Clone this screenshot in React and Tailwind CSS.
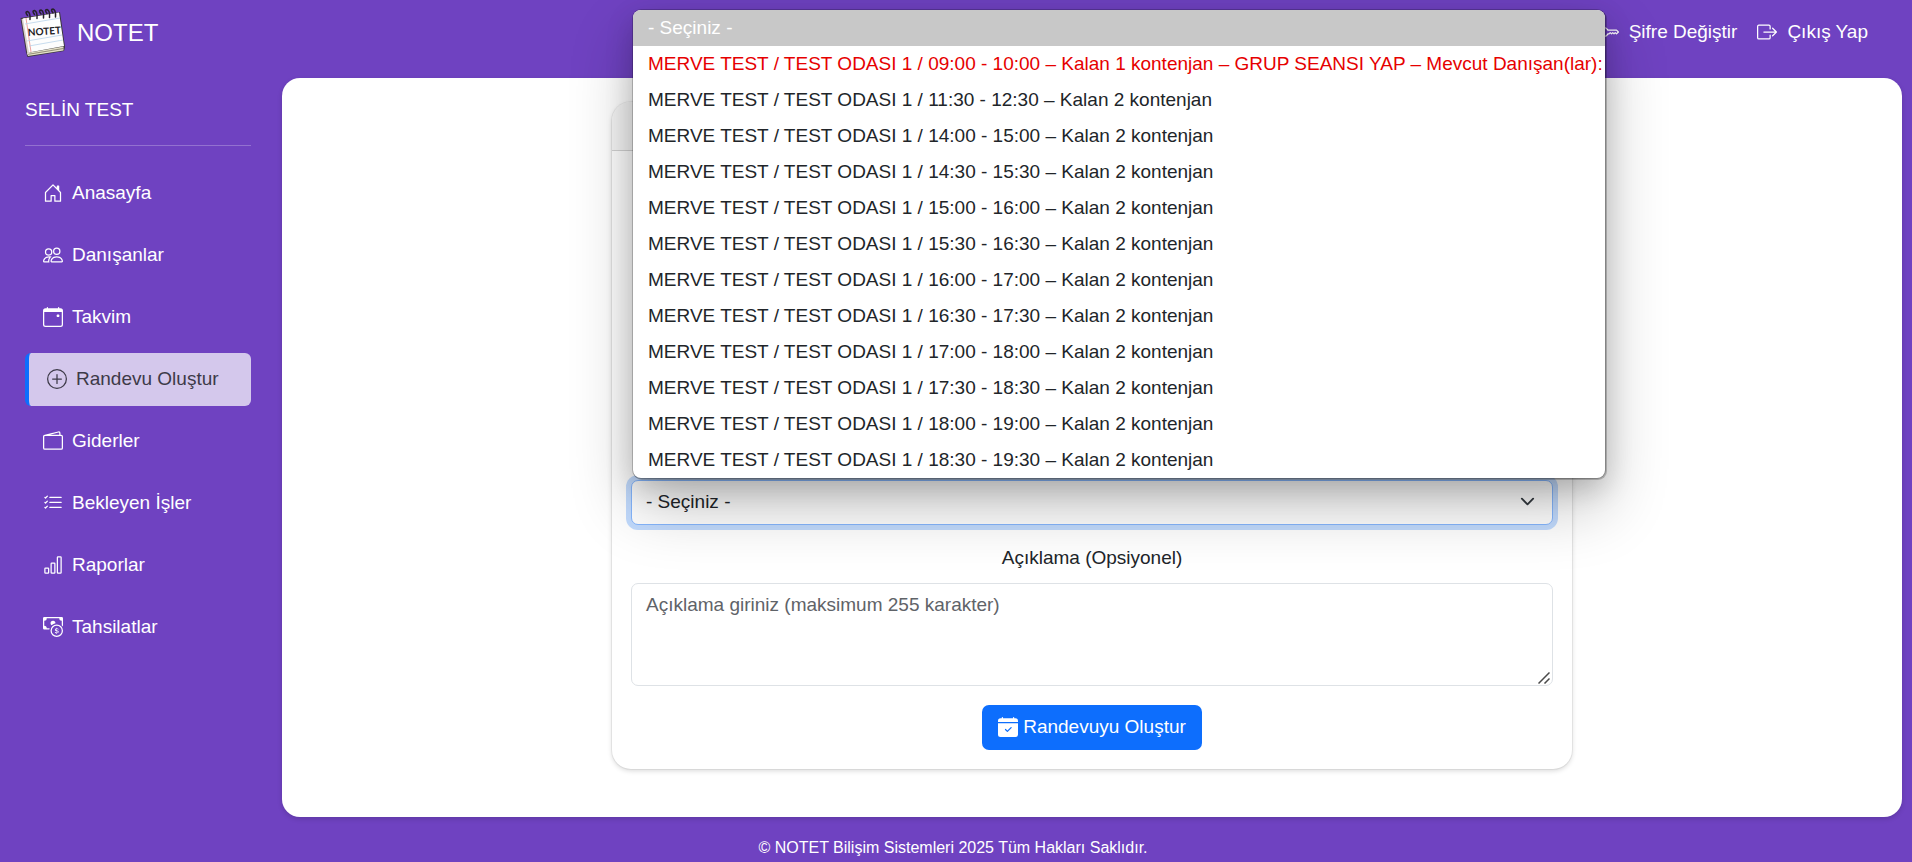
import { useState } from 'react';
import {
  BsBarChart,
  BsBoxArrowRight,
  BsCalendarCheckFill,
  BsCalendarEvent,
  BsCashCoin,
  BsHouseDoor,
  BsKey,
  BsListCheck,
  BsPeople,
  BsPlusCircle,
  BsWallet2,
} from 'react-icons/bs';

const menu = [
  { label: 'Anasayfa', icon: BsHouseDoor },
  { label: 'Danışanlar', icon: BsPeople },
  { label: 'Takvim', icon: BsCalendarEvent },
  { label: 'Randevu Oluştur', icon: BsPlusCircle, active: true },
  { label: 'Giderler', icon: BsWallet2 },
  { label: 'Bekleyen İşler', icon: BsListCheck },
  { label: 'Raporlar', icon: BsBarChart },
  { label: 'Tahsilatlar', icon: BsCashCoin },
];

const hours = [
  '11:30 - 12:30',
  '14:00 - 15:00',
  '14:30 - 15:30',
  '15:00 - 16:00',
  '15:30 - 16:30',
  '16:00 - 17:00',
  '16:30 - 17:30',
  '17:00 - 18:00',
  '17:30 - 18:30',
  '18:00 - 19:00',
  '18:30 - 19:30',
];

function Logo() {
  return (
    <svg viewBox="0 0 48 50" className="h-[50px] w-12 shrink-0" aria-hidden="true">
      <path d="M1.500 10 L7 44 L8.500 49 L45 43 L46 39 L41 4 Z" fill="#3a3638" />
      <path d="M8 45 L44.500 38.500 L44.500 42.500 L9 48 Z" fill="#e4e0c8" />
      <path d="M8 46.500 L44.500 40.500" stroke="#6f6a55" strokeWidth="0.700" />
      <path d="M2.500 11 L7 10 L11 44 L8.500 47 Z" fill="#d9d0cb" />
      <path d="M4 10.500 L40 4.500 L45 38 L10 44.500 Z" fill="#fdfdfd" />
      <path d="M7 10 L12 44" stroke="#e98a86" strokeWidth="0.800" />
      <path d="M6 16 L41 10 M10 38 L44 32 M8 33 L43 27" stroke="#b9d3ea" strokeWidth="0.800" />
      <g fill="none" stroke="#26222a" strokeWidth="1.500" strokeLinecap="round">
        <path d="M8.500 7.500 q-3 -4 0 -4 q3 1 2.500 8" />
        <path d="M15.500 6.500 q-3 -4 0 -4 q3 1 2.500 8" />
        <path d="M22 6 q-3 -4 0 -4 q3 1 2.500 8" />
        <path d="M28 5.500 q-3 -4 0 -4 q3 1 2.500 8" />
        <path d="M34 5 q-3 -4 0 -4 q3 1 2.500 8" />
      </g>
      <text
        x="9"
        y="28"
        transform="rotate(-4 9 28)"
        fontSize="10"
        fontWeight="700"
        fill="#1d1b1f"
        className="font-[Lato,sans-serif]"
      >
        NOTET
      </text>
    </svg>
  );
}

function Header() {
  return (
    <header className="flex h-[78px] items-start justify-between pr-11 pl-[19px]">
      <a href="#" className="flex items-center gap-2.5 pt-2 text-2xl text-white">
        <Logo />
        <span>NOTET</span>
      </a>
      <nav className="flex gap-5 pt-[17px]">
        <a href="#sifre" className="flex items-center gap-2.5 text-white">
          <BsKey size={20} />
          Şifre Değiştir
        </a>
        <a href="#cikis" className="flex items-center gap-2.5 text-white">
          <BsBoxArrowRight size={20} />
          Çıkış Yap
        </a>
      </nav>
    </header>
  );
}

function Sidebar() {
  return (
    <aside className="w-[282px] shrink-0 pr-[31px] pl-[25px]">
      <div className="border-b border-white/25 pt-[17px] pb-[21px] text-white">SELİN TEST</div>
      <nav className="mt-[21px] flex flex-col gap-[9px]">
        {menu.map(({ label, icon: Icon, active }) => (
          <a
            key={label}
            href="#"
            className={
              active
                ? 'flex items-center gap-[9px] rounded-md border-l-4 border-[#0d6efd] bg-[#d4c8ec] pt-[11px] pb-[13px] pl-[18px] text-[#3d3a48]'
                : 'flex items-center gap-[9px] rounded-md pt-[11px] pb-[13px] pl-[18px] text-white'
            }
          >
            <Icon size={20} />
            {label}
          </a>
        ))}
      </nav>
    </aside>
  );
}

// Açık durumdaki seans listesi
function SlotList({ onSelect }) {
  return (
    <ul
      role="listbox"
      aria-label="Seans"
      className="absolute bottom-full left-0.5 z-10 mb-0.5 w-max min-w-[calc(100%+48px)] overflow-hidden rounded-lg bg-white text-[#212529] shadow-[0_0_0_1px_rgba(0,0,0,0.2),1px_1px_0_1px_rgba(0,0,0,0.2),0_10px_28px_rgba(0,0,0,0.18),0_28px_64px_rgba(0,0,0,0.24)]"
    >
      <li
        role="option"
        aria-selected="true"
        onClick={() => onSelect('')}
        className="h-9 bg-[#c8c8c8] pr-0.5 pl-[15px] leading-9 text-white"
      >
        - Seçiniz -
      </li>
      <li
        role="option"
        aria-selected="false"
        className="h-9 pr-0.5 pl-[15px] leading-9 whitespace-nowrap text-[#e60000]"
      >
        MERVE TEST / TEST ODASI 1 / 09:00 - 10:00 – Kalan 1 kontenjan – GRUP SEANSI YAP – Mevcut
        Danışan(lar):
      </li>
      {hours.map((hour) => (
        <li
          key={hour}
          role="option"
          aria-selected="false"
          onClick={() => onSelect(hour)}
          className="h-9 pr-0.5 pl-[15px] leading-9"
        >
          MERVE TEST / TEST ODASI 1 / {hour} – Kalan 2 kontenjan
        </li>
      ))}
    </ul>
  );
}

function AppointmentForm() {
  const [slot, setSlot] = useState('');
  const [note, setNote] = useState('');

  return (
    <form
      onSubmit={(e) => e.preventDefault()}
      className="flex w-full max-w-[960px] flex-1 flex-col rounded-[19px] bg-white shadow-[0_0_0_1px_rgba(0,0,0,0.05),0_2px_5px_rgba(0,0,0,0.15)]"
    >
      <div className="h-[49px] rounded-t-[19px] border-b border-[#d3d3d3] bg-[#f7f7f7]" />
      <div className="flex flex-1 flex-col justify-end p-[19px]">
        <div className="relative">
          <select
            aria-label="Seans"
            value={slot}
            onChange={(e) => setSlot(e.target.value)}
            className="block h-[45px] w-full appearance-none rounded-[7px] border border-[#86b7fe] bg-white px-3.5 pb-0.5 text-[#212529] shadow-[0_0_0_5px_rgba(13,110,253,0.25)] outline-none"
          >
            <option value="">- Seçiniz -</option>
            {hours.map((hour) => (
              <option key={hour}>{hour}</option>
            ))}
          </select>
          <svg
            viewBox="0 0 16 16"
            className="pointer-events-none absolute top-3.5 right-[18px] size-[15px]"
            fill="none"
            stroke="#343a40"
            strokeWidth="2"
            strokeLinecap="round"
            strokeLinejoin="round"
          >
            <path d="m2 5 6 6 6-6" />
          </svg>
          <SlotList onSelect={setSlot} />
        </div>

        <label htmlFor="aciklama" className="mt-[18px] mb-[11px] text-center text-[#212529]">
          Açıklama (Opsiyonel)
        </label>
        <div className="relative">
          <textarea
            id="aciklama"
            maxLength={255}
            value={note}
            onChange={(e) => setNote(e.target.value)}
            placeholder="Açıklama giriniz (maksimum 255 karakter)"
            className="block h-[103px] w-full rounded-[7px] border border-[#dee2e6] bg-white px-3.5 py-1.5 text-[#212529] placeholder:text-[#5f6368] focus:outline-none [&::-webkit-resizer]:hidden"
          />
          <svg
            viewBox="0 0 12 12"
            className="pointer-events-none absolute right-[3px] bottom-0.5 size-3"
            fill="none"
            stroke="#4a4a4a"
            strokeWidth="1.500"
          >
            <path d="M0.500 11.500 L11.500 0.500 M6.500 11.500 L11.500 6.500" />
          </svg>
        </div>

        <button
          type="submit"
          className="mt-[19px] flex h-[45px] items-center gap-[5px] self-center rounded-[7px] bg-[#0d6efd] px-4 pb-0.5 text-white"
        >
          <BsCalendarCheckFill size={20} />
          Randevuyu Oluştur
        </button>
      </div>
    </form>
  );
}

export default function App() {
  return (
    <div className="flex min-h-screen flex-col bg-[#6f42c1] font-['Liberation_Sans',Arial,sans-serif] text-[19px] leading-[29px]">
      <Header />
      <div className="flex flex-1">
        <Sidebar />
        <main className="mr-2.5 flex flex-1 flex-col items-center rounded-[18px] bg-white px-6 pt-6 pb-12 shadow-[0_2px_5px_rgba(0,0,0,0.15)]">
          <AppointmentForm />
        </main>
      </div>
      <footer className="flex h-[45px] items-end justify-center pr-1.5 pb-0.5 text-base text-white">
        © NOTET Bilişim Sistemleri 2025 Tüm Hakları Saklıdır.
      </footer>
    </div>
  );
}
